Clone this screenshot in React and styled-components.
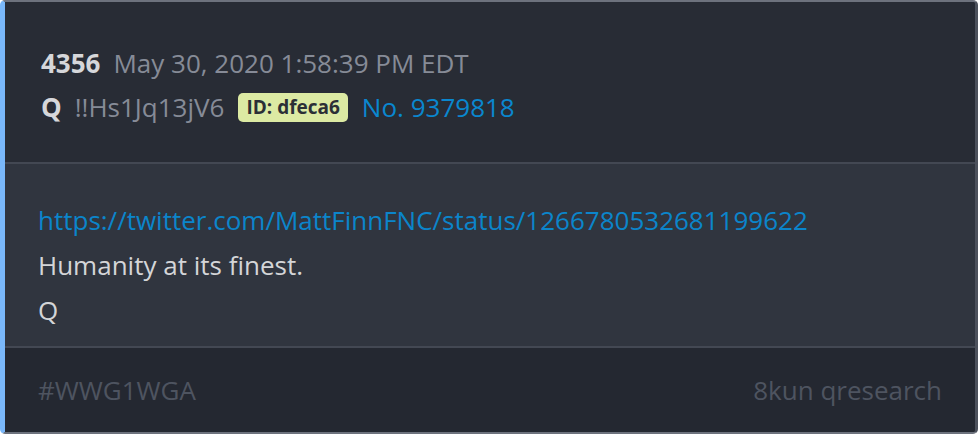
import React from "react";
import styled, { createGlobalStyle } from "styled-components";

const GlobalStyle = createGlobalStyle`
    html, body {
        margin: 0;
        padding: 0;
        background: #ffffff;
    }
    body {
        font-family: "Open Sans", "Noto Sans", sans-serif;
    }
`;

const Card = styled.article`
    box-sizing: border-box;
    width: 978px;
    height: 434px;
    display: flex;
    flex-direction: column;
    border-left: 5px solid #7ab8fa;
    border-top: 2px solid #6d727d;
    border-right: 3px solid #4c515c;
    border-bottom: 2px solid #6d727d;
    border-radius: 5px;
    overflow: hidden;
    background: #282c35;
`;

const Header = styled.header`
    padding: 39px 36px 33px;
    background: #282c35;
    border-bottom: 2px solid #434853;
`;

const Row = styled.div`
    display: flex;
    align-items: center;
    gap: 13px;
    height: 44px;
    font-size: 26px;
`;

const Strong = styled.span`
    font-weight: 700;
    color: #d6d7da;
`;

const Muted = styled.span`
    color: #868b97;
`;

const Badge = styled.span`
    margin-left: 1px;
    background: #dceaa3;
    color: #2b2f36;
    font-weight: 700;
    font-size: 19px;
    line-height: 19px;
    padding: 5px 8px 5px;
    border-radius: 5px;
`;

const PostNo = styled.a`
    margin-left: 1px;
    color: #0a87cf;
    text-decoration: none;
`;

const Body = styled.section`
    flex: 1;
    padding: 34px 33px 0;
    background: #30353f;
    border-bottom: 2px solid #434853;
`;

const Line = styled.p`
    margin: 0;
    height: 45px;
    line-height: 45px;
    font-size: 26px;
    color: ${(p) => (p.$link ? "#0b85cb" : "#d4d5d8")};
`;

const Footer = styled.footer`
    display: flex;
    justify-content: space-between;
    align-items: center;
    height: 84px;
    padding: 0 33px;
    background: #242831;
    font-size: 26px;
    color: #4e5460;
`;

export default function App() {
    return (
        <>
            <GlobalStyle />
            <Card>
                <Header>
                    <Row>
                        <Strong>4356</Strong>
                        <Muted>May 30, 2020 1:58:39 PM EDT</Muted>
                    </Row>
                    <Row>
                        <Strong>Q</Strong>
                        <Muted>!!Hs1Jq13jV6</Muted>
                        <Badge>ID: dfeca6</Badge>
                        <PostNo href="#">No. 9379818</PostNo>
                    </Row>
                </Header>
                <Body>
                    <Line $link>https://twitter.com/MattFinnFNC/status/1266780532681199622</Line>
                    <Line>Humanity at its finest.</Line>
                    <Line>Q</Line>
                </Body>
                <Footer>
                    <span>#WWG1WGA</span>
                    <span>8kun qresearch</span>
                </Footer>
            </Card>
        </>
    );
}
